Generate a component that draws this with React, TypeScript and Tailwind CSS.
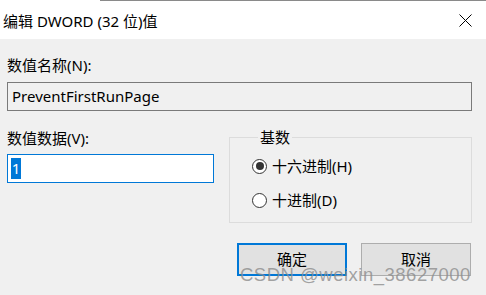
import { useState } from "react"

function Radio({ checked, label }: { checked: boolean; label: string }) {
  return (
    <label className="flex items-center gap-[5px] h-[20px]">
      <span className="w-[15px] h-[15px] rounded-full border border-[#333333] bg-white flex items-center justify-center">
        {checked && <span className="w-[8px] h-[8px] rounded-full bg-[#333333]" />}
      </span>
      <span className="text-[15px] leading-[20px]">{label}</span>
    </label>
  )
}

export default function App() {
  const [hex] = useState(true)

  return (
    <div className="relative w-[486px] h-[295px] overflow-hidden bg-[#f0f0f0] text-black font-['Noto_Sans','Noto_Sans_CJK_SC',sans-serif]">
      <div className="flex h-[2px] bg-white">
        <div className="w-[100px]" />
        <div className="flex-1 border-t-[1px] border-[#8a8a8a]" />
      </div>

      <div className="flex h-[37px] items-center justify-between bg-white pl-[3px] pr-[14px]">
        <span className="text-[15px] leading-[20px]">编辑 DWORD (32 位)值</span>
        <svg width="13" height="13" viewBox="0 0 13 13" className="text-black">
          <path d="M0.5 0.5 L12.5 12.5 M12.5 0.5 L0.5 12.5" stroke="currentColor" strokeWidth="1" />
        </svg>
      </div>

      <div className="px-[7px]">
        <div className="mt-[16px] text-[15px] leading-[20px]">数值名称(N):</div>
        <div className="mt-[7px] mr-[7px] flex h-[29px] items-center border border-[#7a7a7a] bg-[#f0f0f0] px-[4px] text-[15px]">
          PreventFirstRunPage
        </div>

        <div className="mt-[17px] flex">
          <div className="w-[207px]">
            <div className="text-[15px] leading-[20px]">数值数据(V):</div>
            <div className="mt-[6px] flex h-[29px] items-center border border-[#0078d7] bg-white px-[3px]">
              <span className="inline-block h-[21px] w-[10px] bg-[#0078d7] text-center text-[15px] leading-[21px] text-white">
                1
              </span>
            </div>
          </div>

          <fieldset className="ml-[15px] -mt-[1px] h-[96px] w-[243px] border border-[#dcdcdc] pl-[22px] pt-[9px]">
            <legend className="ml-[6px] px-[2px] text-[15px] leading-[20px]">基数</legend>
            <div className="flex flex-col gap-[14px]">
              <Radio checked={hex} label="十六进制(H)" />
              <Radio checked={!hex} label="十进制(D)" />
            </div>
          </fieldset>
        </div>

        <div className="mt-[20px] mr-[8px] flex justify-end gap-[14px]">
          <button className="flex h-[33px] w-[110px] items-center justify-center border-2 border-[#0078d7] bg-[#e1e1e1] text-[15px]">
            确定
          </button>
          <button className="flex h-[33px] w-[110px] items-center justify-center border border-[#adadad] bg-[#e1e1e1] text-[15px]">
            取消
          </button>
        </div>
      </div>

      <div className="absolute left-[240px] top-[264px] text-[18.5px] leading-[22px] tracking-[0.5px] text-[#8c8c8c]/80 font-['Liberation_Sans',sans-serif]">
        CSDN @weixin_38627000
      </div>
    </div>
  )
}
